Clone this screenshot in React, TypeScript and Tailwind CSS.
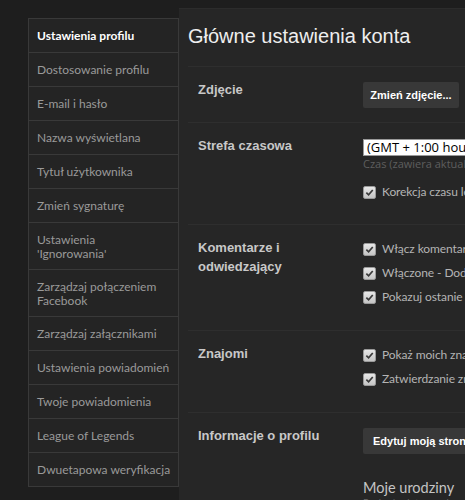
const menu: { label: string[]; active?: boolean }[] = [
  { label: ['Ustawienia profilu'], active: true },
  { label: ['Dostosowanie profilu'] },
  { label: ['E-mail i hasło'] },
  { label: ['Nazwa wyświetlana'] },
  { label: ['Tytuł użytkownika'] },
  { label: ['Zmień sygnaturę'] },
  { label: ['Ustawienia', "'Ignorowania'"] },
  { label: ['Zarządzaj połączeniem', 'Facebook'] },
  { label: ['Zarządzaj załącznikami'] },
  { label: ['Ustawienia powiadomień'] },
  { label: ['Twoje powiadomienia'] },
  { label: ['League of Legends'] },
  { label: ['Dwuetapowa weryfikacja'] },
];

function Check({ label }: { label: string }) {
  return (
    <div className="flex h-4 items-center gap-[6px] whitespace-nowrap">
      <span className="flex h-[13px] w-[13px] shrink-0 items-center justify-center rounded-[2px] border border-[#9a9a9a] bg-gradient-to-b from-[#e8e8e8] to-[#c4c4c4]">
        <svg viewBox="0 0 10 10" className="h-[9px] w-[9px]">
          <path d="M1.5 5.2 L4 7.6 L8.6 2.2" fill="none" stroke="#3a3a3a" strokeWidth="1.9" />
        </svg>
      </span>
      <span className="font-['Lato',sans-serif] text-[12px] tracking-[-0.1px] text-[#b4b4b4]">{label}</span>
    </div>
  );
}

function Row({ label, children, className }: { label: React.ReactNode; children: React.ReactNode; className: string }) {
  return (
    <div className={`flex border-t border-[#2e2e2e] pl-[10px] pt-[16px] ${className}`}>
      <div className="-mt-[3px] w-[165px] shrink-0 font-['Liberation_Sans',sans-serif] text-[13px] leading-[19px] font-bold text-[#c8c8c8]">
        {label}
      </div>
      <div className="flex flex-col">{children}</div>
    </div>
  );
}

export default function App() {
  return (
    <div className="flex h-[500px] w-[465px] overflow-hidden bg-[#1e1e1e] font-['Open_Sans',sans-serif]">
      <div className="ml-[28px] mt-[18px] w-[151px] shrink-0 self-start border border-[#393939] bg-[#242424] font-['Lato',sans-serif]">
        {menu.map((m, i) => (
          <div
            key={m.label.join(' ')}
            className={`pt-[10px] pl-[8px] text-[12px] leading-[14px] whitespace-nowrap ${m.label.length > 1 ? 'pb-[8px]' : 'pb-[9px]'} ${i < menu.length - 1 ? 'border-b border-[#393939]' : ''} ${m.active ? 'font-bold text-white' : 'text-[#9a9a9a]'}`}
          >
            {m.label.map((l) => (
              <div key={l}>{l}</div>
            ))}
          </div>
        ))}
      </div>

      <div className="mt-[8px] flex-1 border-t border-[#2c2c2c] bg-[#262626] pl-[9px]">
        <h1 className="pt-[15px] pb-[18px] font-['Liberation_Sans',sans-serif] text-[20px] leading-[24px] text-[#eeeeee]">
          Główne ustawienia konta
        </h1>

        <Row label="Zdjęcie" className="pb-[14px]">
          <button className="-mt-[1px] h-[26px] w-[96px] rounded-[2px] bg-[#383838] font-['Liberation_Sans',sans-serif] text-[11px] font-bold text-white">
            Zmień zdjęcie...
          </button>
        </Row>

        <Row label="Strefa czasowa" className="pb-[24px]">
          <div className="h-[17px] w-[200px] border border-[#999] bg-white pl-[3px] text-[13px] leading-[15px] whitespace-nowrap text-black">
            (GMT + 1:00 hours) Amsterdam
          </div>
          <div className="mt-[1px] text-[11px] leading-[13px] whitespace-nowrap text-[#5e5e5e]">
            Czas (zawiera aktualny czas)
          </div>
          <div className="mt-[14px]">
            <Check label="Korekcja czasu letniego" />
          </div>
        </Row>

        <Row label={<>Komentarze i<br />odwiedzający</>} className="pb-[25px]">
          <div className="flex flex-col gap-2">
            <Check label="Włącz komentarze" />
            <Check label="Włączone - Dodawanie" />
            <Check label="Pokazuj ostanie X" />
          </div>
        </Row>

        <Row label="Znajomi" className="pb-[25px]">
          <div className="flex flex-col gap-2">
            <Check label="Pokaż moich znajomych" />
            <Check label="Zatwierdzanie znajomych" />
          </div>
        </Row>

        <Row label="Informacje o profilu" className="pb-[10px]">
          <button className="-mt-[1px] h-[26px] w-[130px] rounded-[2px] bg-[#383838] pl-[10px] text-left font-['Liberation_Sans',sans-serif] text-[11px] font-bold whitespace-nowrap text-white">
            Edytuj moją stronę
          </button>
          <div className="mt-[25px] font-['Lato',sans-serif] text-[14.5px] leading-[18px] whitespace-nowrap text-[#c4c4c4]">Moje urodziny</div>
          <div className="text-[10px] leading-[12px] whitespace-nowrap text-[#666]">Podanie daty urodzenia</div>
        </Row>
      </div>
    </div>
  );
}
